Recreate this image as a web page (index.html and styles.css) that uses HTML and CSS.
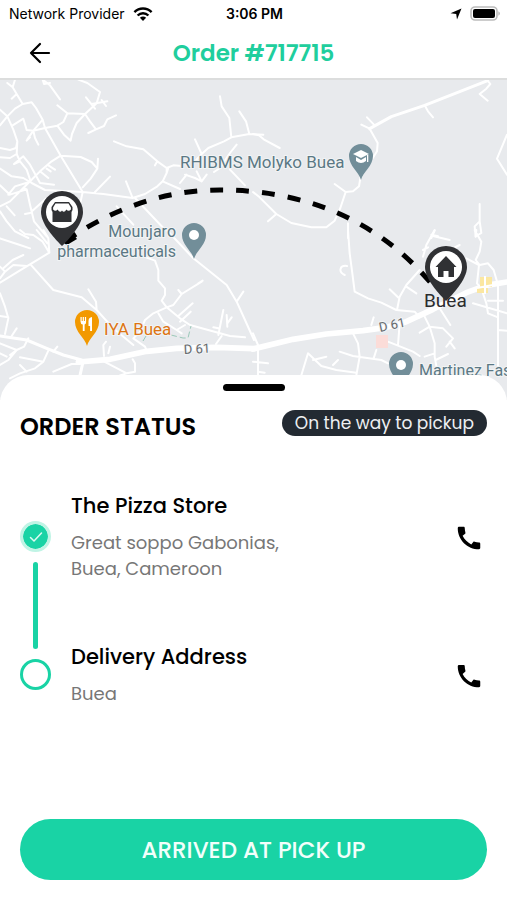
FILE: index.html
```html
<!DOCTYPE html>
<html lang="en">
<head>
<meta charset="utf-8">
<meta name="viewport" content="width=device-width, initial-scale=1">
<title>Order #717715</title>
<link rel="stylesheet" href="styles.css">
</head>
<body>
<div class="status-bar">
  <div class="carrier">
    <span>Network Provider</span>
    <svg width="20" height="14" viewBox="0 0 20 14" aria-hidden="true">
      <g fill="none" stroke="#000" stroke-width="2.4">
        <path d="M1.4 5.2C6.3.3 13.7.3 18.6 5.2"/>
        <path d="M4.6 8.5C7.6 5.5 12.4 5.5 15.4 8.5"/>
      </g>
      <path d="M6.9 10.8C8.7 9.1 11.3 9.1 13.1 10.8L10 13.9Z"/>
    </svg>
  </div>
  <time>3:06 PM</time>
  <div class="device">
    <svg width="12" height="12" viewBox="0 0 12 12" aria-hidden="true"><path d="M11.5.5 7 11.5 6.2 5.9.5 5.2Z"/></svg>
    <svg width="30" height="15" viewBox="0 0 30 15" aria-hidden="true">
      <rect x="1" y="1" width="26" height="13" rx="4" fill="#fff" stroke="#bcbcbc" stroke-width="1.6"/>
      <rect x="3" y="3" width="22" height="9" rx="2"/>
      <path d="M28.3 5.2Q30 6 30 7.5T28.3 9.8Z" fill="#bcbcbc"/>
    </svg>
  </div>
</div>

<header class="app-bar">
  <button class="icon-button" type="button" aria-label="Back">
    <svg width="22" height="22" viewBox="0 0 22 22" fill="none" stroke="#000" stroke-width="2.2" stroke-linecap="round" stroke-linejoin="round"><path d="M20 11H2M11 2 2 11l9 9"/></svg>
  </button>
  <h1>Order #717715</h1>
</header>

<svg class="map" viewBox="0 80 507 320" preserveAspectRatio="xMidYMin slice" role="img" aria-label="Delivery route map">
  <defs>
    <path id="place" d="M0 24C-2 16-12 10-12 0A12 12 0 1 1 12 0C12 10 2 16 0 24Z"/>
    <path id="stop" d="M0 34C-5 29-21 13-21 0A21 21 0 1 1 21 0C21 13 5 29 0 34Z"/>
  </defs>
  <rect y="78" width="507" height="322" fill="#e8eaed"/>
  <g class="roads">
    <g transform="translate(0 78) scale(.333333)">
      <path d="M45 5 38 28 22 15M38 28 50 48 68 78 95 73 108 90 128 125 135 150 182 233 248 342M50 48 35 62M68 78 45 92 22 115 0 95M22 115 0 142M22 115 40 155 52 190 48 210 30 216 0 210M52 190 50 228 30 240 0 238M128 125 100 158 80 156 70 122 38 142M135 150 100 158 82 184M100 158 105 180 115 200M90 178 80 188M128 5 150 22 180 64M128 5 132 18 150 15M235 5 262 15 300 42 290 76 255 108 202 106 172 82M202 106 190 132 172 143 135 150M172 143 192 170 212 188 216 168 230 135 255 108M255 108 270 130 288 154 265 165M288 154 312 144 322 124 348 112M258 58 285 92M275 78 322 70M305 66 318 84"/>
      <path d="M182 233 155 250 120 280 88 312 70 330 30 370 0 385M182 233 242 237 275 252 292 272 272 302 248 328M292 272 294 242M50 228 60 250 42 258 70 235 90 260 120 315 162 320M60 250 80 275 92 310M0 272 35 295 70 300 95 315 135 336 248 342 310 348 398 360 435 348 472 325 488 310 500 285 500 270 472 250 430 214 380 205 342 190M120 280 145 300M145 262 165 275M140 272 152 280M472 250 465 262M500 270 520 262 545 264M488 310 540 333M500 285 505 270M0 322 30 350 80 334 70 330M25 350 45 325 88 312M80 334 90 380 102 430 140 475M90 405 75 408M90 405 140 360M20 385 44 412M0 400 20 430 45 460 85 480M248 342 240 380M285 342 330 296M398 360 378 310M405 360 490 450M350 385 400 440"/>
      <path d="M660 55 665 85 688 120 694 178 672 190 625 210 605 228 585 184M605 228 585 250M694 178 748 168 790 170M718 100 738 130 748 168M710 200 690 225 660 270 642 282M605 310 585 300 555 290M605 310 590 280M540 315 560 290M690 275 735 322M605 310 620 290"/>
    </g>
    <g transform="translate(253 78) scale(.333333)">
      <path d="M0 168 18 172 32 184 80 210M0 342 20 358 70 408 115 435 175 448 220 448 245 428 262 390 278 342 300 340 318 325 322 300 350 255 372 220 374 195 350 152 325 140M278 342 245 318M365 142 342 118M515 82 525 100 540 118M704 8 712 18 700 32 680 48 704 68M762 170 732 242 762 290M70 408 45 430M285 436 285 480M680 378 680 430 665 445 668 475 685 465 680 430M545 458 535 480M535 470 555 475"/>
      <path class="medium" d="M350 152 415 116 515 82 704 8"/>
    </g>
    <g transform="translate(0 230) scale(.333333)">
      <path d="M0 158 70 115 148 68 128 35 100 15 75 12 60 0M148 68 145 25 130 0M80 108 40 105 15 125 0 110M15 125 0 145M70 75 38 90 10 115M90 55 60 45 0 25M110 0 142 40M92 104 160 180 245 202 290 240 340 295 400 345M290 240 288 215 265 178M0 190 15 230 25 265 15 312M0 258 25 262M35 318 50 295M0 340 50 360 30 375M50 360 72 350 85 325M0 405 25 390 50 360M160 365 172 350M145 362 130 395 105 415 60 430 30 445M60 382 130 395M60 405 80 425M0 370 20 380M160 425 215 402 240 402M300 388 380 430 405 425 405 400 398 388M380 430 360 436M312 378 310 345 318 335M325 370 330 350M432 80 465 92 475 120 475 152 495 175 495 195 485 212 500 232 540 265 570 285 690 318 735 322M500 232 520 225 545 192 605 155M545 192 535 180M595 160 608 152M500 232 460 250 435 270 420 305 400 325 435 350 440 362M475 250 490 275 530 300 555 285M530 300 545 310M535 258 578 220M540 275 572 245M500 0 580 85 680 165 710 215 735 270 762 330M710 215 730 185M655 315 670 240M655 295 640 292M682 290 680 255M682 280 695 262M648 342 665 318"/>
      <path class="medium" d="M0 318 80 330 140 355 190 375 245 390"/>
      <path class="medium" d="M250 392 240 436"/>
      <path class="major" d="M235 396 330 388 440 364 530 355 650 352 762 356"/>
    </g>
    <g transform="translate(253 230) scale(.333333)">
      <path d="M285 0 290 70 298 130 305 185 345 205 385 218 430 240 485 245 500 262M275 135C255 125 260 105 282 108M500 120 460 165 440 200 432 240M410 178 435 202M460 170 490 190M545 0 520 45 510 80M540 18 590 30M590 60 620 45M525 52 510 60M665 0 685 35 680 65 668 90 680 105 705 100 722 120 735 165 735 290 735 436M670 0 668 20M640 85 678 105 672 160 685 175 700 220 705 250 735 262M660 220 762 250M705 212 750 212M735 300 762 302M560 235 592 285M510 250 530 290 545 340 545 380 555 436M500 308 530 290 570 295 600 325 580 350M590 335 605 355M548 390 585 372M545 370 515 380M435 345 440 280M405 335 480 365 500 378M355 285 362 262M300 310 315 340 320 380 310 436M260 365 300 378 385 390 405 400M370 360 362 385M145 436 165 370 205 408 250 420 310 428M180 390 220 380M240 405 255 390M0 310 15 345 15 436M0 395 45 400M15 425 35 428"/>
      <path class="major" d="M0 357 120 328 220 312 330 302 395 293 460 275 540 238 640 188 700 166 762 156"/>
    </g>
  </g>
  <g fill="#fbe7a1"><path d="M480 277h12v10h-12zM477 288h11v5h-11z"/></g>
  <path d="M485 276v18M477 288l16-3" stroke="#fff" stroke-width="2"/>
  <rect x="376" y="335" width="12" height="13" fill="#fbdcd8"/>
  <path d="M143 341l3-5M171 335l12 3 5 0 3-12" fill="none" stroke="#9ac8b9" stroke-dasharray="6 3"/>

  <path class="route" d="M70 238C120 205 170 190 220 190S360 200 430 282"/>
  <path d="M62 242l5 3 10-6-4-5z"/>

  <g class="labels">
    <text x="180" y="168">RHIBMS Molyko Buea</text>
    <text class="small" x="176" y="237" text-anchor="end">Mounjaro</text>
    <text class="small" x="176" y="257" text-anchor="end">pharmaceuticals</text>
    <text class="small" x="419" y="376">Martinez Fas</text>
    <text class="food" x="104" y="335">IYA Buea</text>
    <text class="road-name" x="184" y="354" transform="rotate(-3 184 354)">D 61</text>
    <text class="road-name" x="380" y="332" transform="rotate(-12 380 332)">D 61</text>
  </g>

  <g fill="#728e99">
    <use href="#place" x="361" y="156"/>
    <use href="#place" x="194" y="235"/>
    <use href="#place" x="401" y="364"/>
  </g>
  <g fill="#fff">
    <circle cx="194" cy="235" r="5"/>
    <circle cx="401" cy="365" r="5"/>
    <path d="M361 150l8 4-8 4-8-4zM356 157l5 3 5-3v4q-5 4-10 0zM367 155h1.3v7H367z"/>
  </g>
  <use href="#place" x="87" y="322" fill="#f29900"/>
  <path d="M80.500 317h1.200v4h1v-4h1.200v4h1v-4h1.200v5q0 2-1.500 2.500v6.500h-1.800v-6.500q-2.300-.5-2.300-3zM92 317v14h-1.900v-5h-1.600v-5q0-3.500 3.500-4z" fill="#fff"/>

  <text class="town" x="424" y="307">Buea</text>
  <g transform="translate(62 212)">
    <use href="#stop" fill="#303134"/>
    <circle r="16" fill="#fff"/>
    <path d="M-7-10H7L10.500-5V-2L9.500 0V10H-9.500V0L-10.500-2V-5Z" fill="#303134"/>
    <path d="M-6.500-8.400H6.500L8.900-4.500V-2.500Q6.500 0 4.400-2.500Q2 1.500 0-1.500Q-2 1.500-4.400-2.500Q-6.500 0-8.900-2.500V-4.500Z" fill="#fff"/>
  </g>
  <g transform="translate(446 267)">
    <use href="#stop" fill="#303134"/>
    <circle r="16" fill="#fff"/>
    <path d="M0-11 10.500 0H8V10H2.500V4H-2.500V10H-8V0H-10.500Z" fill="#303134"/>
  </g>
</svg>

<main class="sheet">
  <div class="handle"></div>
  <div class="sheet-head">
    <h2>ORDER STATUS</h2>
    <span class="pill">On the way to pickup</span>
  </div>
  <div class="timeline">
    <div class="rail" aria-hidden="true">
      <span class="marker done"><svg width="14" height="12" viewBox="0 0 14 12" fill="none" stroke="#dffaf2" stroke-width="1.500" stroke-linecap="round" stroke-linejoin="round"><path d="M1.500 6.500 5 10 12.500 2"/></svg></span>
      <span class="connector"></span>
      <span class="marker open"></span>
    </div>
    <ol class="stops">
      <li>
        <div>
          <h3>The Pizza Store</h3>
          <p>Great soppo Gabonias,<br>Buea, Cameroon</p>
        </div>
        <a class="call" href="tel:" aria-label="Call The Pizza Store"><svg width="30" height="30" viewBox="0 0 24 24"><path d="M20 15.500c-1.200 0-2.400-.2-3.600-.6-.3-.1-.7 0-1 .2l-1.600 2c-2.800-1.300-5.500-3.900-6.900-6.800l2-1.700c.3-.3.4-.7.200-1-.3-1.100-.5-2.300-.5-3.500 0-.6-.4-1-1-1H4.200C3.600 3.100 3 3.400 3 4.100 3 13.400 10.700 21 20 21c.7 0 1-.6 1-1.200v-3.300c0-.6-.4-1-1-1z"/></svg></a>
      </li>
      <li>
        <div>
          <h3>Delivery Address</h3>
          <p>Buea</p>
        </div>
        <a class="call" href="tel:" aria-label="Call delivery contact"><svg width="30" height="30" viewBox="0 0 24 24"><path d="M20 15.500c-1.200 0-2.400-.2-3.600-.6-.3-.1-.7 0-1 .2l-1.600 2c-2.800-1.300-5.500-3.900-6.900-6.800l2-1.700c.3-.3.4-.7.200-1-.3-1.100-.5-2.300-.5-3.500 0-.6-.4-1-1-1H4.200C3.600 3.100 3 3.400 3 4.100 3 13.400 10.700 21 20 21c.7 0 1-.6 1-1.200v-3.300c0-.6-.4-1-1-1z"/></svg></a>
      </li>
    </ol>
  </div>
  <button class="primary" type="button">ARRIVED AT PICK UP</button>
</main>
</body>
</html>
```

FILE: styles.css
```css
* {
  box-sizing: border-box;
}

body {
  display: flex;
  flex-direction: column;
  min-height: 100vh;
  margin: 0;
  background: #fff;
  color: #000;
  font-family: Poppins, Inter, sans-serif;
}

h1, h2, h3, p, ol {
  margin: 0;
  padding: 0;
}

svg {
  display: block;
}

button {
  border: 0;
  font: inherit;
  cursor: pointer;
}

.status-bar {
  display: grid;
  grid-template-columns: 1fr auto 1fr;
  align-items: center;
  height: 27px;
  padding: 0 7px 0 9px;
  font-family: Inter, sans-serif;
  font-size: 14px;
}

.status-bar time {
  font-weight: 600;
}

.carrier, .device {
  display: flex;
  align-items: center;
  gap: 8px;
}

.device {
  justify-content: flex-end;
}

.app-bar {
  display: grid;
  grid-template-columns: 40px 1fr 40px;
  align-items: center;
  height: 51px;
  padding: 0 20px;
}

.icon-button {
  display: grid;
  place-items: center;
  width: 40px;
  height: 40px;
  padding: 0;
  background: none;
}

.app-bar h1 {
  color: #20ce9d;
  font-size: 23px;
  font-weight: 600;
  line-height: 32px;
  text-align: center;
}

.map {
  width: 100%;
  height: 322px;
  border-top: 2px solid #dcdddd;
}

.roads {
  fill: none;
  stroke: #fff;
  stroke-width: 6;
  stroke-linejoin: round;
  stroke-linecap: round;
}

.roads .medium {
  stroke-width: 9;
}

.roads .major {
  stroke-width: 17;
}

.route {
  fill: none;
  stroke: #000;
  stroke-width: 5;
  stroke-dasharray: 13 13;
  stroke-dashoffset: 6;
}

.labels text {
  fill: #5b7884;
  stroke: #f2f4f5;
  stroke-width: 2px;
  paint-order: stroke;
  font-family: Roboto, sans-serif;
  font-size: 17px;
}

.labels .small {
  font-size: 16px;
}

.labels .food {
  fill: #dd7414;
}

.labels .road-name {
  fill: #666a6e;
  font-size: 13px;
}

.town {
  fill: #2b2c2e;
  font-family: Roboto, sans-serif;
  font-size: 19px;
}

.sheet {
  position: relative;
  display: flex;
  flex: 1;
  flex-direction: column;
  margin-top: -25px;
  padding: 9px 20px 20px;
  border-radius: 28px 28px 0 0;
  background: #fff;
}

.handle {
  align-self: center;
  width: 62px;
  height: 7px;
  border-radius: 4px;
  background: #000;
}

.sheet-head {
  display: flex;
  align-items: flex-start;
  justify-content: space-between;
  margin: 19px 0 49px;
}

.sheet-head h2 {
  font-size: 24px;
  font-weight: 600;
  line-height: 34px;
}

.pill {
  padding: 0 13px;
  border-radius: 13px;
  background: #232a32;
  color: #eef0f2;
  font-size: 17px;
  line-height: 26px;
}

.timeline {
  display: flex;
  gap: 20px;
}

.rail {
  display: flex;
  flex-direction: column;
  align-items: center;
  gap: 10px;
  padding: 28px 0 17px;
}

.marker {
  display: grid;
  place-items: center;
  width: 31px;
  height: 31px;
  border-radius: 50%;
}

.done {
  border: 3px solid #c0f4e5;
  background: #19d3a5;
  background-clip: padding-box;
}

.open {
  border: 3px solid #19d3a5;
}

.connector {
  flex: 1;
  width: 5px;
  border-radius: 3px;
  background: #19d3a5;
}

.stops {
  display: flex;
  flex: 1;
  flex-direction: column;
  gap: 62px;
  list-style: none;
}

.stops li {
  display: flex;
  align-items: center;
  justify-content: space-between;
}

.stops h3 {
  margin-bottom: 11px;
  font-size: 21px;
  font-weight: 500;
  line-height: 26px;
}

.stops p {
  color: #777;
  font-size: 18px;
  line-height: 26px;
}

.call {
  margin-right: 3px;
}

.primary {
  height: 61px;
  margin-top: auto;
  border-radius: 31px;
  background: #19d3a5;
  color: #f2fffb;
  font-size: 23px;
  font-weight: 500;
}
```
